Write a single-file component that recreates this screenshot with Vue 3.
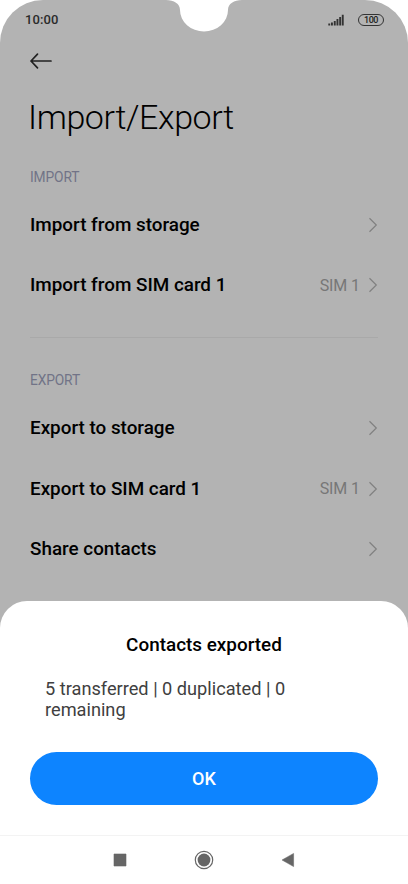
<script setup>
const sections = [
  {
    title: 'IMPORT',
    items: [
      { label: 'Import from storage' },
      { label: 'Import from SIM card 1', value: 'SIM 1' },
    ],
  },
  {
    title: 'EXPORT',
    items: [
      { label: 'Export to storage' },
      { label: 'Export to SIM card 1', value: 'SIM 1' },
      { label: 'Share contacts' },
    ],
  },
]
</script>

<template>
  <div class="phone">
    <div class="screen">
      <svg class="notch" viewBox="0 0 76 32" width="76" height="32" aria-hidden="true">
        <path d="M0 0C8 .2 14 3.500 14 10A24 21.500 0 0 0 62 10C62 3.500 68 .2 76 0Z" fill="#fff" />
      </svg>
      <header class="status">
        <span class="time">10:00</span>
        <div class="indicators">
          <svg class="signal" viewBox="0 0 16 12" width="16" height="12" aria-hidden="true">
            <path d="M.3 9.600h1.900V11.500H.3zM3 8.500h1.900v3H3zM5.800 7h1.900v4.500H5.800zM8.500 5h1.900v6.500H8.500zM11.200 3h1.900v8.500h-1.900zM13.800 .8h1.900v10.700h-1.900z" fill="#333" />
          </svg>
          <span class="battery">100</span>
        </div>
      </header>
      <div class="back">
        <svg viewBox="0 0 24 18" width="24" height="18" aria-hidden="true">
          <path d="M22 9H2M8.500 2.200L2 9l6.500 6.800" fill="none" stroke="#222" stroke-width="1.700" stroke-linecap="round" stroke-linejoin="round" />
        </svg>
      </div>
      <h1>Import/Export</h1>
      <section v-for="section in sections" :key="section.title">
        <h2>{{ section.title }}</h2>
        <div v-for="item in section.items" :key="item.label" class="row">
          <span class="label">{{ item.label }}</span>
          <span v-if="item.value" class="value">{{ item.value }}</span>
          <svg class="chevron" viewBox="0 0 10 16" width="10" height="16" aria-hidden="true">
            <path d="M1.500 1.300L8.300 8l-6.800 6.700" fill="none" stroke="#808080" stroke-width="1.200" />
          </svg>
        </div>
      </section>
    </div>
    <div class="dialog">
      <h3>Contacts exported</h3>
      <p>5 transferred | 0 duplicated | 0 remaining</p>
      <button>OK</button>
    </div>
    <nav>
      <svg viewBox="0 0 20 20" width="20" height="20"><path d="M4 4h12v12H4z" fill="#666" stroke="#666" stroke-width=".6" stroke-linejoin="round" /></svg>
      <svg viewBox="0 0 20 20" width="20" height="20"><circle cx="10" cy="10" r="8.700" fill="none" stroke="#666" stroke-width="1.200" /><circle cx="10" cy="10" r="6.400" fill="#666" /></svg>
      <svg viewBox="0 0 20 20" width="20" height="20"><path d="M15.600 3.400v13.200L4 10z" fill="#666" stroke="#666" stroke-width=".5" stroke-linejoin="round" /></svg>
    </nav>
  </div>
</template>

<style>
body {
  background: #fff;
}
</style>

<style scoped>
.phone {
  position: relative;
  width: 408px;
  height: 884px;
  overflow: hidden;
  background: #fff;
  font-family: Roboto, sans-serif;
  color: #000;
}
.screen {
  position: relative;
  height: 640px;
  overflow: hidden;
  border-radius: 43px 43px 0 0;
  background: #b3b3b3;
}
.notch {
  position: absolute;
  left: 166px;
  top: 0;
}
.status {
  display: flex;
  align-items: center;
  justify-content: space-between;
  height: 40px;
  padding: 0 24px 0 25px;
}
.time {
  font-size: 13px;
  font-weight: 500;
  line-height: 16px;
  letter-spacing: 0.1px;
  color: #2b2b2b;
}
.indicators {
  display: flex;
  align-items: center;
  gap: 14px;
  padding-bottom: 1px;
}
.battery {
  box-sizing: border-box;
  width: 26px;
  height: 12px;
  border: 1px solid #333;
  border-radius: 6px;
  font-size: 9px;
  font-weight: 500;
  line-height: 10px;
  letter-spacing: -0.4px;
  text-align: center;
  color: #222;
}
.back {
  display: flex;
  height: 41px;
  padding-left: 29px;
  align-items: center;
}
h1 {
  margin: 16px 0 0 28px;
  font-size: 34px;
  font-weight: 300;
  line-height: 41px;
  letter-spacing: -0.4px;
}
section {
  margin: 0 30px;
}
section + section {
  margin-top: 22px;
  border-top: 1px solid #a9a9a9;
}
h2 {
  margin: 0;
  padding-top: 29px;
  font-size: 13.800px;
  font-weight: 400;
  line-height: 20px;
  letter-spacing: -0.15px;
  color: #717387;
}
section + section h2 {
  padding-top: 32px;
}
.row {
  display: flex;
  align-items: center;
  height: 60.500px;
}
h2 + .row {
  margin-top: 7.400px;
}
.label {
  flex: 1;
  font-size: 18.850px;
  font-weight: 500;
}
.value {
  margin-right: 8px;
  font-size: 16px;
  letter-spacing: -0.1px;
  color: #777;
}
.dialog {
  position: absolute;
  left: 0;
  right: 0;
  top: 601px;
  box-sizing: border-box;
  height: 234px;
  padding: 32px 30px 0;
  border-radius: 27px 27px 0 0;
  background: #fff;
}
h3 {
  margin: 0;
  font-size: 18.900px;
  font-weight: 500;
  line-height: 24px;
  text-align: center;
}
p {
  margin: 21px 60px 0 15px;
  font-size: 18.200px;
  line-height: 21px;
  color: #404040;
}
button {
  display: block;
  width: 348px;
  height: 53px;
  margin: 32px 0 0;
  padding: 0;
  border: 0;
  border-radius: 27px;
  background: #0d84ff;
  font: 500 18px Roboto, sans-serif;
  color: #fff;
}
nav {
  position: absolute;
  left: 0;
  right: 0;
  bottom: 0;
  display: flex;
  justify-content: center;
  gap: 64px;
  box-sizing: border-box;
  height: 49px;
  padding-right: 1px;
  align-items: center;
  border-top: 1px solid #f3f3f3;
  background: #fff;
}
</style>
